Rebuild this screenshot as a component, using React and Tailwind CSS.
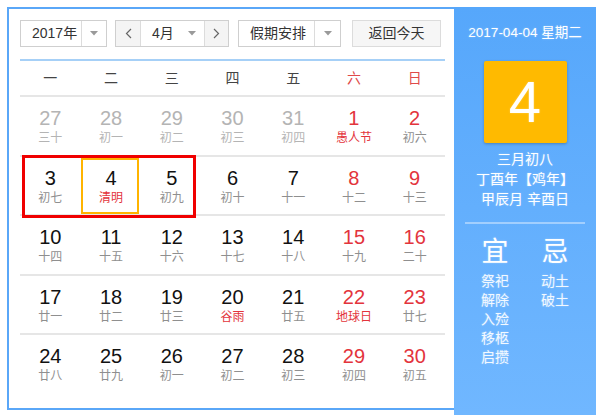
import React from "react";

const FONT = { fontFamily: '"Liberation Sans", "Noto Sans CJK SC", sans-serif' };

const weeks = [
  [
    { d: 27, l: "三十", prev: true },
    { d: 28, l: "初一", prev: true },
    { d: 29, l: "初二", prev: true },
    { d: 30, l: "初三", prev: true },
    { d: 31, l: "初四", prev: true },
    { d: 1, l: "愚人节", red: true, fest: true },
    { d: 2, l: "初六", red: true },
  ],
  [
    { d: 3, l: "初七" },
    { d: 4, l: "清明", fest: true },
    { d: 5, l: "初九" },
    { d: 6, l: "初十" },
    { d: 7, l: "十一" },
    { d: 8, l: "十二", red: true },
    { d: 9, l: "十三", red: true },
  ],
  [
    { d: 10, l: "十四" },
    { d: 11, l: "十五" },
    { d: 12, l: "十六" },
    { d: 13, l: "十七" },
    { d: 14, l: "十八" },
    { d: 15, l: "十九", red: true },
    { d: 16, l: "二十", red: true },
  ],
  [
    { d: 17, l: "廿一" },
    { d: 18, l: "廿二" },
    { d: 19, l: "廿三" },
    { d: 20, l: "谷雨", fest: true },
    { d: 21, l: "廿五" },
    { d: 22, l: "地球日", red: true, fest: true },
    { d: 23, l: "廿七", red: true },
  ],
  [
    { d: 24, l: "廿八" },
    { d: 25, l: "廿九" },
    { d: 26, l: "初一" },
    { d: 27, l: "初二" },
    { d: 28, l: "初三" },
    { d: 29, l: "初四", red: true },
    { d: 30, l: "初五", red: true },
  ],
];

const Caret = () => (
  <svg width="8" height="5" viewBox="0 0 8 5">
    <path d="M0 0 L8 0 L4 4.5 Z" fill="#9a9a9a" />
  </svg>
);

const Chevron = ({ dir }) => (
  <svg width="7" height="11" viewBox="0 0 7 11">
    <polyline
      points={dir === "left" ? "6,1 1.5,5.5 6,10" : "1,1 5.5,5.5 1,10"}
      fill="none"
      stroke="#666"
      strokeWidth="1.2"
    />
  </svg>
);

const Controls = () => (
  <div className="flex items-center h-[27px] ml-[1px] text-[14px] text-[#333]">
    <div className="flex h-full w-[87px] border border-[#cfcfcf] bg-white">
      <div className="flex-1 flex items-center pl-[11px]">2017年</div>
      <div className="w-[25px] flex items-center justify-center border-l border-[#dcdcdc]">
        <Caret />
      </div>
    </div>
    <div className="flex h-full w-[114px] ml-[8px] border border-[#cfcfcf] bg-white">
      <div className="w-[25px] flex items-center justify-center bg-[#f4f4f4] border-r border-[#dcdcdc]">
        <Chevron dir="left" />
      </div>
      <div className="flex-1 flex items-center justify-between pl-[11px] pr-[8px]">
        <span>4月</span>
        <Caret />
      </div>
      <div className="w-[24px] flex items-center justify-center bg-[#f4f4f4] border-l border-[#dcdcdc]">
        <Chevron dir="right" />
      </div>
    </div>
    <div className="flex h-full w-[103px] ml-[9px] border border-[#cfcfcf] bg-white">
      <div className="flex-1 flex items-center pl-[11px]">假期安排</div>
      <div className="w-[26px] flex items-center justify-center border-l border-[#dcdcdc]">
        <Caret />
      </div>
    </div>
    <div className="flex h-full w-[89px] ml-[11px] items-center justify-center border border-[#dcdcdc] bg-[#f6f6f6]">
      返回今天
    </div>
  </div>
);

const Cell = ({ c }) => {
  const numColor = c.prev ? "text-[#b4b4b4]" : c.red ? "text-[#e3343c]" : "text-[#111]";
  const lunarColor = c.fest ? "text-[#e3343c]" : c.prev ? "text-[#b4b4b4]" : "text-[#8f8f8f]";
  return (
    <div className="flex flex-col items-center">
      <div className={`mt-[10px] h-[23px] leading-[23px] text-[20px] ${numColor}`}>{c.d}</div>
      <div className={`h-[17px] leading-[17px] text-[12px] ${lunarColor}`}>{c.l}</div>
    </div>
  );
};

const Calendar = () => (
  <div className="flex flex-col">
    <div className="mt-[12px] h-[2px] bg-[#a6d0f7] ml-[1px] mr-[1px]" />
    <div className="grid grid-cols-7 h-[36px] border-b-2 border-[#e6e6e6] mx-[1px] text-[14px]">
      {["一", "二", "三", "四", "五", "六", "日"].map((w, i) => (
        <div
          key={w}
          className={`flex items-center justify-center ${i > 4 ? "text-[#e04a4a]" : "text-[#444]"}`}
        >
          {w}
        </div>
      ))}
    </div>
    <div className="relative">
      {weeks.map((row, ri) => (
        <div
          key={ri}
          className={`grid grid-cols-7 h-[59.5px] mx-[1px] ${ri < weeks.length - 1 ? "border-b-2 border-[#e6e6e6]" : ""}`}
        >
          {row.map((c, ci) => (
            <Cell key={ci} c={c} />
          ))}
        </div>
      ))}
      <div className="absolute left-[3px] top-[58px] w-[174px] h-[63px] border-[3px] border-[#f00000]" />
      <div className="absolute left-[62px] top-[61px] w-[58px] h-[56px] border-2 border-[#ffb400]" />
    </div>
  </div>
);

const SidePanel = () => (
  <div
    className="w-[142px] h-[408px] flex flex-col items-center text-white bg-gradient-to-b from-[#56a7fb] to-[#70b7ff]"
    style={{ textShadow: "0 0 2px rgba(255,255,255,0.35)" }}
  >
    <div className="mt-[17px] h-[18px] leading-[18px] text-[13.5px]">2017-04-04 星期二</div>
    <div className="mt-[19px] w-[83px] h-[82px] rounded-[2px] bg-[#ffba00] shadow-[0_1px_3px_rgba(0,0,0,0.25)] flex items-center justify-center text-[58px] leading-none">
      4
    </div>
    <div className="mt-[6px] text-[14px] leading-[20px] text-center">
      <div>三月初八</div>
      <div>丁酉年【鸡年】</div>
      <div>甲辰月 辛酉日</div>
    </div>
    <div className="mt-[13px] w-[120px] h-[2px] bg-white/40" />
    <div className="grid grid-cols-2 w-[120px] mt-[13px]">
      <div className="flex flex-col items-center">
        <div className="text-[27px] leading-[30px]">宜</div>
        <div className="mt-[5px] text-[14px] leading-[19px] text-white/90 flex flex-col items-center">
          {["祭祀", "解除", "入殓", "移柩", "启攒"].map((t) => (
            <div key={t}>{t}</div>
          ))}
        </div>
      </div>
      <div className="flex flex-col items-center">
        <div className="text-[27px] leading-[30px]">忌</div>
        <div className="mt-[5px] text-[14px] leading-[19px] text-white/90 flex flex-col items-center">
          {["动土", "破土"].map((t) => (
            <div key={t}>{t}</div>
          ))}
        </div>
      </div>
    </div>
  </div>
);

export default function App() {
  return (
    <div className="w-[600px] h-[415px] overflow-hidden bg-white" style={FONT}>
      <div className="flex ml-[7px] mt-[7px]">
        <div className="w-[447px] h-[403px] border-2 border-r-0 border-[#5aa7f8] pl-[10px] pr-[8px] pt-[11px]">
          <Controls />
          <Calendar />
        </div>
        <SidePanel />
      </div>
    </div>
  );
}
